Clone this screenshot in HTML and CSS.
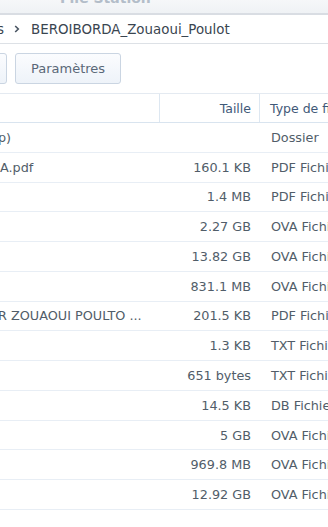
FILE: index.html
```html
<!DOCTYPE html>
<html lang="fr">
<head>
    <meta charset="UTF-8">
    <meta name="viewport" content="width=device-width, initial-scale=1.0">
    <title>File Station</title>
    <link rel="stylesheet" href="styles.css">
</head>
<body>
    <div class="window">
        <div class="titlebar"><span class="title">File Station</span></div>

        <div class="breadcrumb">
            <span class="crumb crumb--cut">s</span>
            <svg class="crumb-sep" width="6" height="8" viewBox="0 0 6 8"><path d="M1.2 1 L4.3 4 L1.2 7" fill="none" stroke="#4a5663" stroke-width="1.6"/></svg>
            <span class="crumb">BEROIBORDA_Zouaoui_Poulot</span>
        </div>

        <div class="toolbar">
            <button class="tool-button tool-button--cut"></button>
            <button class="tool-button">Paramètres</button>
        </div>

        <div class="grid">
            <div class="grid-row grid-header">
                <div class="cell cell-name"></div>
                <div class="cell cell-size">Taille</div>
                <div class="cell cell-type">Type de fichier</div>
            </div>
            <div class="grid-row">
                <div class="cell cell-name"><span class="name-cut">p)</span></div>
                <div class="cell cell-size"></div>
                <div class="cell cell-type">Dossier</div>
            </div>
            <div class="grid-row">
                <div class="cell cell-name">A.pdf</div>
                <div class="cell cell-size">160.1 KB</div>
                <div class="cell cell-type">PDF Fichier</div>
            </div>
            <div class="grid-row">
                <div class="cell cell-name"></div>
                <div class="cell cell-size">1.4 MB</div>
                <div class="cell cell-type">PDF Fichier</div>
            </div>
            <div class="grid-row">
                <div class="cell cell-name"></div>
                <div class="cell cell-size">2.27 GB</div>
                <div class="cell cell-type">OVA Fichier</div>
            </div>
            <div class="grid-row">
                <div class="cell cell-name"></div>
                <div class="cell cell-size">13.82 GB</div>
                <div class="cell cell-type">OVA Fichier</div>
            </div>
            <div class="grid-row">
                <div class="cell cell-name"></div>
                <div class="cell cell-size">831.1 MB</div>
                <div class="cell cell-type">OVA Fichier</div>
            </div>
            <div class="grid-row">
                <div class="cell cell-name"><span class="name-cut">R ZOUAOUI POULTO ...</span></div>
                <div class="cell cell-size">201.5 KB</div>
                <div class="cell cell-type">PDF Fichier</div>
            </div>
            <div class="grid-row">
                <div class="cell cell-name"></div>
                <div class="cell cell-size">1.3 KB</div>
                <div class="cell cell-type">TXT Fichier</div>
            </div>
            <div class="grid-row">
                <div class="cell cell-name"></div>
                <div class="cell cell-size">651 bytes</div>
                <div class="cell cell-type">TXT Fichier</div>
            </div>
            <div class="grid-row">
                <div class="cell cell-name"></div>
                <div class="cell cell-size">14.5 KB</div>
                <div class="cell cell-type">DB Fichier</div>
            </div>
            <div class="grid-row">
                <div class="cell cell-name"></div>
                <div class="cell cell-size">5 GB</div>
                <div class="cell cell-type">OVA Fichier</div>
            </div>
            <div class="grid-row">
                <div class="cell cell-name"></div>
                <div class="cell cell-size">969.8 MB</div>
                <div class="cell cell-type">OVA Fichier</div>
            </div>
            <div class="grid-row">
                <div class="cell cell-name"></div>
                <div class="cell cell-size">12.92 GB</div>
                <div class="cell cell-type">OVA Fichier</div>
            </div>
        </div>
    </div>
</body>
</html>
```

FILE: styles.css
```css
body {
    margin: 0;
    font-family: "DejaVu Sans", Verdana, sans-serif;
    background-color: white;
}
.window {
    width: 328px;
    height: 527px;
    overflow: hidden;
    background-color: white;
}
.titlebar {
    height: 13px;
    overflow: hidden;
    padding-left: 60px;
    background: linear-gradient(#f6f7f9, #eff2f5);
    border-bottom: 2px solid #d9dde3;
}
.title {
    display: block;
    margin-top: -10px;
    font-size: 14px;
    line-height: 16px;
    font-weight: bold;
    color: #b3bdc9;
    white-space: nowrap;
}
.breadcrumb {
    height: 28px;
    display: flex;
    align-items: center;
    gap: 8px;
    border-bottom: 1px solid #dde1e6;
    font-size: 13.4px;
    color: #3a4550;
    white-space: nowrap;
    overflow: hidden;
}
.crumb--cut {
    margin-left: -3px;
}
.crumb-sep {
    flex-shrink: 0;
    margin: 0 3px 0 2px;
}
.toolbar {
    height: 49px;
    display: flex;
    align-items: flex-start;
    gap: 8px;
    padding-top: 9px;
    box-sizing: border-box;
    border-bottom: 1px solid #e4eaf1;
    height: 50px;
}
.tool-button {
    height: 31px;
    padding: 0 15px;
    border: 1px solid #cad5e2;
    border-radius: 3px;
    background: linear-gradient(#fbfcfe, #eef3f9);
    font-family: inherit;
    font-size: 13px;
    color: #5a6878;
}
.tool-button--cut {
    width: 30px;
    margin-left: -25px;
}
.tool-button:last-child {
    width: 106px;
    padding: 0;
}
.grid {
    font-size: 12.8px;
    color: #515d69;
}
.grid-row {
    display: flex;
    height: 29.77px;
    box-sizing: border-box;
    border-bottom: 1px solid #e8eef5;
    align-items: stretch;
}
.grid-header {
    height: 29px;
    border-bottom: 1px solid #d9e4ef;
    color: #3f5978;
    font-size: 12.5px;
}
.cell {
    display: flex;
    align-items: center;
    white-space: nowrap;
    overflow: hidden;
    box-sizing: border-box;
}
.cell-name {
    width: 160px;
    flex-shrink: 0;
}
.cell-size {
    width: 100px;
    flex-shrink: 0;
    justify-content: flex-end;
    padding-right: 9px;
}
.cell-type {
    flex: 1;
    padding-left: 11px;
}
.grid-header .cell-name,
.grid-header .cell-size {
    border-right: 1px solid #dde7f1;
}
.grid-header .cell-size {
    padding-right: 8px;
}
.grid-header .cell-type {
    padding-left: 10px;
}
.name-cut {
    margin-left: -2px;
}
```
